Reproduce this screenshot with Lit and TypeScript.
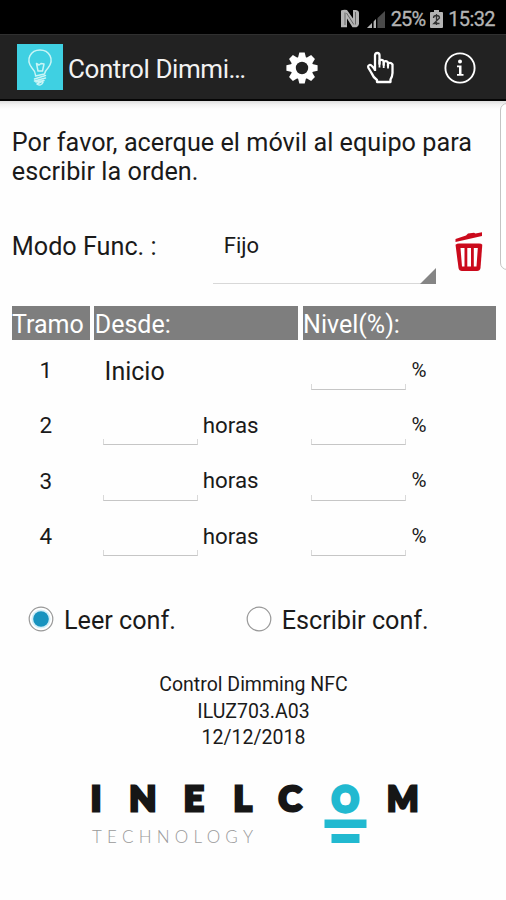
import { LitElement, html, css, svg } from "lit";
import { customElement, state } from "lit/decorators.js";

const ROWS = [1, 2, 3, 4];

@customElement("app-root")
export class AppRoot extends LitElement {
  @state() mode = "leer";

  static styles = css`
    :host {
      display: block;
      position: relative;
      width: 506px;
      height: 900px;
      overflow: hidden;
      background: #fefefe;
      color: #1a1a1a;
      font-family: Roboto, "Noto Sans", sans-serif;
      font-size: 25.2px;
      white-space: nowrap;
    }
    * { box-sizing: border-box; }
    svg { display: block; flex: none; }
    .status {
      height: 34px;
      background: #000;
      color: #b4b4b4;
      display: flex;
      align-items: center;
      justify-content: flex-end;
      padding: 3px 11px 0 0;
      font-size: 20px;
      line-height: 24px;
    }
    .status .nfc { margin-right: 8px; }
    .status .signal { margin-right: 6px; }
    .status .battery { margin: 0 5px 0 5px; }
    .pct { letter-spacing: -0.9px; -webkit-text-stroke: 0.3px #b4b4b4; }
    .clock { letter-spacing: -0.6px; -webkit-text-stroke: 0.3px #b4b4b4; }
    .bar {
      height: 67px;
      background: #222;
      border-top: 1px solid #303030;
      border-bottom: 2px solid #050505;
      display: flex;
      align-items: center;
      padding-left: 17px;
      color: #f2f2f2;
    }
    .bar h1 {
      margin: 3px 0 0 5px;
      width: 217px;
      font-weight: 400;
      font-size: 26px;
      letter-spacing: -0.42px;
      line-height: 32px;
    }
    .bar .gear { margin-top: 2px; }
    .bar .hand { margin: 2px 0 0 47px; }
    .bar .info { margin: 2px 0 0 47px; }
    .shade {
      height: 8px;
      background: linear-gradient(#dedede, #f3f3f3 45%, #fefefe);
    }
    .edge {
      position: absolute;
      left: 500px;
      top: 103px;
      width: 14px;
      height: 167px;
      border: 1px solid #c4c4c4;
      border-radius: 7px;
      background: #fff;
    }
    .message {
      margin: 19px 0 0 11.8px;
      line-height: 29.3px;
      letter-spacing: 0.03px;
    }
    .mode {
      display: flex;
      height: 57px;
      margin: 40.4px 0 0 11.8px;
    }
    .mode label { width: 201px; padding-top: 5px; line-height: 29px; }
    .spinner {
      width: 223.5px;
      height: 57px;
      border-bottom: 1.5px solid #d8d8d8;
      display: flex;
      justify-content: space-between;
      align-items: flex-end;
      padding-left: 11px;
      font-size: 22px;
    }
    .spinner span { align-self: flex-start; padding-top: 5px; line-height: 27px; }
    .spinner svg { margin-bottom: -1.5px; }
    .mode .trash { margin: 5px 0 0 18px; }
    .head {
      display: grid;
      grid-template-columns: 78.5px 204px 193px;
      column-gap: 4.3px;
      margin: 22.5px 0 0 11.5px;
      color: #fff;
      font-size: 25px;
      line-height: 33.5px;
    }
    .head span { background: #7e7e7e; height: 33.5px; padding: 2px 0 0 0.5px; }
    .row {
      display: grid;
      grid-template-columns: 91px 95px 113.5px 95px 40px;
      align-items: start;
      height: 55.3px;
      padding-left: 11.8px;
      line-height: 30px;
      font-size: 22.5px;
    }
    .rows { padding-top: 15px; }
    .num { width: 68px; text-align: center; }
    .start { font-size: 25px; padding: 2px 0 0 1.8px; grid-column: 2 / 4; }
    .unit { padding: 0.7px 0 0 5px; font-size: 22.3px; line-height: 29px; }
    .sign { padding: 0.7px 0 0 5.3px; font-size: 20.5px; line-height: 29px; }
    .field {
      height: 6px;
      margin-top: 29px;
      border: 1px solid #d9d9d9;
      border-bottom: 1.5px solid #c6c6c6;
      border-top: 0;
    }
    .choices { display: flex; margin-top: 26.500px; padding-left: 28px; line-height: 30px; }
    .choice { display: flex; align-items: center; width: 217.700px; }
    .choice span { margin-left: 10px; padding-top: 3px; }
    .about {
      margin-top: 36.5px;
      text-align: center;
      font-size: 19.5px;
      line-height: 26.6px;
      padding-left: 1px;
    }
    .brand { margin: 11px 0 0 80px; }
    .brand .name { font: 900 35px Lato, sans-serif; fill: #161616; stroke: #161616; stroke-width: 3px; }
    .brand .ring { font: 400 32px Lato, sans-serif; fill: #21b9d0; stroke: #21b9d0; stroke-width: 5.4px; }
    .brand .sub { font: 300 17px Lato, sans-serif; fill: #999; }
  `;

  private radio(on: boolean) {
    return html`<svg width="26" height="26" viewBox="0 0 26 26">
      <circle cx="13" cy="13" r="11.8" fill="#fff" stroke="#999" stroke-width="1.2" />
      ${on ? svg`<circle cx="13" cy="13" r="9.600" fill="#d3eff8"/><circle cx="13" cy="13" r="7.800" fill="#1793bf"/>` : null}
    </svg>`;
  }

  render() {
    return html`
      <div class="status">
        <svg class="nfc" width="18" height="19" viewBox="0 0 18 19">
          <path d="M0 1.500 Q3 .2 6 1 L12 9.500 V1 H15 Q18 1.500 18 4 V15 Q17.500 17.500 15.500 18.200 H11.500 L6 9.500 V18.200 H0 Z" fill="#b4b4b4" />
          <path d="M4 3.500 V16 M5.500 4 L12.800 15.500 M14.500 3 V15.500" stroke="#555" stroke-width=".8" fill="none" />
        </svg>
        <svg class="signal" width="18" height="18" viewBox="0 0 18 18">
          <path d="M0 18 L18 1 V18Z" fill="#4a4a4a" />
          <path d="M0 18 L5 13 V18Z M6.500 18 V11.500 L9 9 V18Z" fill="#b4b4b4" />
          <path d="M5.700 11 V18 M9.700 8 V18" stroke="#000" stroke-width="1.400" />
        </svg>
        <span class="pct">25%</span>
        <svg class="battery" width="13" height="18" viewBox="0 0 13 18">
          <path d="M4 0 H9 V2 H12 Q13 2 13 3 V17 Q13 18 12 18 H1 Q0 18 0 17 V3 Q0 2 1 2 H4Z" fill="#b4b4b4" />
          <path d="M3.500 8 Q3.500 5.500 6.500 5.500 Q9.500 5.500 9.500 8 L3.800 13.500 H9.500 M6.500 4 V15" fill="none" stroke="#333" stroke-width="1.300" />
        </svg>
        <span class="clock">15:32</span>
      </div>
      <div class="bar">
        <svg width="46" height="46" viewBox="0 0 46 46">
          <rect width="46" height="46" fill="#3fd0e2" />
          <g fill="none" stroke="#c9f5f6" stroke-width="1.500" stroke-linecap="round" stroke-linejoin="round">
            <path d="M18.500 31 Q18 27 15 24 C8 15 14 6 23 6 S38 15 31 24 Q28 27 27.500 30 L18.500 32" />
            <path d="M21 27 L19.500 19.500 L22 21 L24 19.500 L27 20 L25.500 27 Z" />
            <path d="M17.500 35 L28.500 31.500 M17.500 37 L28.500 34 M19 38 L27 36.500 L20 40 Q24 42.500 26 38.500" />
          </g>
        </svg>
        <h1>Control Dimmi…</h1>
        <svg class="gear" width="34" height="34" viewBox="-17 -17 34 34">
          <g fill="#fff">
            ${[0, 45, 90, 135].map(
              (a) => svg`<path d="M-2.700 -15.600 H2.700 L4.300 -9 V9 L2.700 15.600 H-2.700 L-4.300 9 V-9Z" transform="rotate(${a})"/>`
            )}
            <circle r="11.300" />
          </g>
          <circle r="6.200" fill="#222" />
        </svg>
        <svg class="hand" width="30" height="34" viewBox="0 0 30 34">
          <path d="M9 20 V4.500 Q9 2 11.300 2 Q13.500 2 13.500 4.500 V13 V10 Q15.800 7.800 17.700 10.300 V14 V11 Q20 9 22 11.500 V15 V12.600 Q24.600 10.800 26.500 13.500 V22 Q26.300 26 24.500 28.500 V31 H11 V29 Q7 26 5.500 22 L2.500 17 Q1.500 14.500 3.500 14 Q5.500 13.500 9 19" fill="none" stroke="#fff" stroke-width="2.300" stroke-linejoin="round" />
          <path d="M13.500 9 V16.500 M17.700 10 V17 M22 11 V17.500" stroke="#fff" stroke-width="1.800" />
        </svg>
        <svg class="info" width="34" height="34" viewBox="0 0 34 34">
          <circle cx="17" cy="17" r="14.600" fill="none" stroke="#fff" stroke-width="1.900" />
          <circle cx="17" cy="10.600" r="2" fill="#fff" />
          <path d="M14 14.500 H18.500 V23 H20.500 V24.800 H14 V23 H16 V16.200 H14Z" fill="#fff" />
        </svg>
      </div>
      <div class="shade"></div>
      <div class="edge"></div>
      <div class="message">Por favor, acerque el móvil al equipo para<br />escribir la orden.</div>
      <div class="mode">
        <label>Modo Func. :</label>
        <div class="spinner">
          <span>Fijo</span>
          <svg width="16" height="16" viewBox="0 0 16 16"><path d="M16 0 V16 H0Z" fill="#858585" /></svg>
        </div>
        <svg class="trash" width="30" height="40" viewBox="0 0 30 40">
          <path d="M1.500 7 L12 3.500 L14 1.500 L20 .8 L21.500 1.500 L28 .3 V4 L1.500 10Z" fill="#cb0a1c" />
          <path d="M1.500 12.800 Q3 11.500 5 11.500 H25 Q27.500 11.500 28.300 12.800 L26.500 36 Q26 39 23 39 H8 Q5 39 4.500 36Z" fill="#cb0a1c" />
          <path d="M6.500 16 H10.500 V34.500 H8Z M13.300 16 H17 V34.500 H13.300Z M19.800 16 H23.800 L22.500 34.500 H19.800Z" fill="#fff" />
        </svg>
      </div>
      <div class="head"><span>Tramo</span><span>Desde:</span><span>Nivel(%):</span></div>
      <div class="rows">
        ${ROWS.map(
          (n) => html`<div class="row">
            <span class="num">${n}</span>
            ${n === 1
              ? html`<span class="start">Inicio</span>`
              : html`<span class="field"></span><span class="unit">horas</span>`}
            <span class="field"></span><span class="sign">%</span>
          </div>`
        )}
      </div>
      <div class="choices">
        <div class="choice" @click=${() => (this.mode = "leer")}>${this.radio(this.mode === "leer")}<span>Leer conf.</span></div>
        <div class="choice" @click=${() => (this.mode = "escribir")}>${this.radio(this.mode === "escribir")}<span>Escribir conf.</span></div>
      </div>
      <div class="about">Control Dimming NFC<br />ILUZ703.A03<br />12/12/2018</div>
      <svg class="brand" width="360" height="100" viewBox="80 763 360 100">
        <text class="name" y="811" x="90.700 129.300 183.700 233.500 278.500">INELC</text>
        <text class="name ring" y="810.800" x="345.300" text-anchor="middle">O</text>
        <text class="name" y="811" x="387" textLength="31.500" lengthAdjust="spacingAndGlyphs">M</text>
        <text class="sub" x="92" y="842.500" textLength="161">TECHNOLOGY</text>
        <path d="M324.500 819.500 H366.500 V828 H324.500Z M331.500 834 H359.500 V843 H331.500Z" fill="#21b9d0" />
      </svg>
    `;
  }
}
